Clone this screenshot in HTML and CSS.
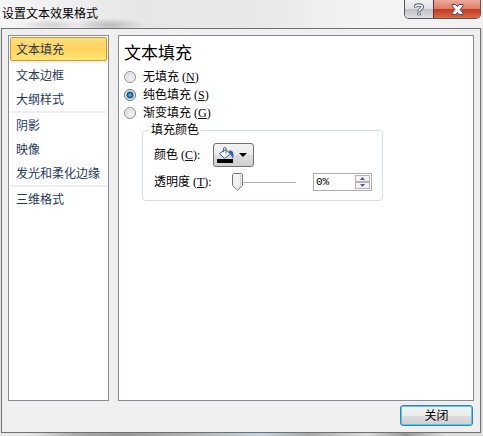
FILE: index.html
```html
<!DOCTYPE html>
<html lang="zh-CN">
<head>
    <meta charset="UTF-8">
    <meta name="viewport" content="width=device-width, initial-scale=1.0">
    <title>设置文本效果格式</title>
    <link rel="stylesheet" href="styles.css">
</head>
<body>

    <!-- Title Bar -->
    <header class="titlebar">
        <h1>设置文本效果格式</h1>
        <div class="window-buttons">
            <button type="button" class="help" aria-label="帮助">
                <svg width="10" height="13" viewBox="0 0 10 13" fill="none">
                    <path d="M1.5 4.5V3.8C1.5 1.2 8.3 1.2 8.3 4C8.3 6 5 6 5 8.6M5 9.8V12.2" stroke="#4c5064" stroke-width="3.4"/>
                    <path d="M1.5 4V3.8C1.8 1.4 8.2 1.4 8.2 4C8.2 6 5 6 5 8M5 10.2V11.8" stroke="#fff" stroke-width="1.6"/>
                </svg>
            </button>
            <button type="button" class="close" aria-label="关闭窗口">
                <svg width="13" height="11" viewBox="0 0 13 11">
                    <path d="M1 .5H4.9L6.5 2.6L8.1 .5H12V2L9.1 5.5L12 9V10.5H8.1L6.5 8.4L4.9 10.5H1V9L3.9 5.5L1 2Z" fill="#fff" stroke="#504c60"/>
                </svg>
            </button>
        </div>
    </header>

    <div class="dialog">
        <div class="panels">

            <!-- Category List -->
            <nav class="sidebar">
                <ul>
                    <li><a href="#fill" class="active">文本填充</a></li>
                </ul>
                <ul>
                    <li><a href="#border">文本边框</a></li>
                    <li><a href="#outline">大纲样式</a></li>
                </ul>
                <ul>
                    <li><a href="#shadow">阴影</a></li>
                    <li><a href="#reflection">映像</a></li>
                    <li><a href="#glow">发光和柔化边缘</a></li>
                </ul>
                <ul>
                    <li><a href="#format3d">三维格式</a></li>
                </ul>
            </nav>

            <!-- Fill Options -->
            <main class="content" id="fill">
                <h2>文本填充</h2>
                <label class="option"><input type="radio" name="fill">无填充<span class="key">(<u>N</u>)</span></label>
                <label class="option"><input type="radio" name="fill" checked>纯色填充<span class="key">(<u>S</u>)</span></label>
                <label class="option"><input type="radio" name="fill">渐变填充<span class="key">(<u>G</u>)</span></label>

                <fieldset>
                    <legend>填充颜色</legend>
                    <div class="row">
                        <label for="color">颜色<span class="key">(<u>C</u>):</span></label>
                        <button type="button" id="color" class="color-button">
                            <svg width="18" height="16" viewBox="0 0 18 16">
                                <path d="M12 3.5C15.5 3 17.5 5.5 16 11.5C14.5 10.5 14.5 7 11.5 5.5Z" fill="#2f62b5"/>
                                <path d="M2.5 6.5L8.5 2.5L13.5 7L7.5 11.5Z" fill="#e4effb" stroke="#42618f"/>
                                <path d="M4.5 7.5L8.5 4.5L10.5 6L6 9Z" fill="#fff"/>
                                <path d="M6.5 5V1.5C6.5 0 9 0 9 1.5V6.5" fill="none" stroke="#56647c"/>
                                <rect x="0" y="12" width="16" height="4" fill="#000"/>
                            </svg>
                            <svg width="8" height="4" viewBox="0 0 8 4">
                                <path d="M0 0H8L4 4Z" fill="#000"/>
                            </svg>
                        </button>
                    </div>
                    <div class="row">
                        <label for="opacity">透明度<span class="key">(<u>T</u>):</span></label>
                        <input type="range" id="opacity" min="0" max="100" value="0">
                        <div class="spinner">
                            <input type="text" value="0%" aria-label="透明度">
                            <div class="steps">
                                <button type="button" aria-label="增加"><svg width="5" height="3" viewBox="0 0 5 3"><path d="M0 3L2.5 0L5 3Z" fill="#3f5cb0"/></svg></button>
                                <button type="button" aria-label="减少"><svg width="5" height="3" viewBox="0 0 5 3"><path d="M0 0L2.5 3L5 0Z" fill="#3f5cb0"/></svg></button>
                            </div>
                        </div>
                    </div>
                </fieldset>
            </main>
        </div>

        <footer>
            <button type="button" class="default-button">关闭</button>
        </footer>
    </div>

</body>
</html>
```
FILE: styles.css
```css
/* Base Styling */
* {
    box-sizing: border-box;
}

body {
    display: flex;
    flex-direction: column;
    min-height: 100vh;
    margin: 0;
    padding: 0 2px 3px 1px;
    font-family: "Liberation Sans", "Noto Sans CJK SC", sans-serif;
    font-size: 12px;
    line-height: 16px;
    color: #000;
    background: linear-gradient(90deg, #e8e8e8 6%, #aaa 16%, #999 26%, #b4b4b4 40%, #c6d4dc 54%, #a8a8a8 64%, #ddd 76%, #999 84%, #ddd 92%);
}

button,
input {
    margin: 0;
    padding: 0;
    font: inherit;
    color: inherit;
}

/* Title Bar */
.titlebar {
    display: flex;
    justify-content: space-between;
    align-items: flex-start;
    height: 28px;
    margin: 0 -2px 0 -1px;
    padding: 0 2px;
    background:
        radial-gradient(ellipse 36px 7px at 110px 25px, #bbb, transparent),
        radial-gradient(ellipse 30px 6px at 50px 25px, #d2d2d2, transparent),
        linear-gradient(90deg, #f6f6f6, #e6e6e6 30%, #e9e9e9 55%, #f4f4f4 75%, #f2f2f2);
}

.titlebar h1 {
    margin: 0;
    padding-top: 6px;
    font-size: 12px;
    font-weight: 400;
}

.window-buttons {
    display: flex;
    height: 19px;
    border: 1px solid #55585f;
    border-top: 0;
    border-radius: 0 0 5px 5px;
    overflow: hidden;
}

.window-buttons button {
    display: flex;
    justify-content: center;
    align-items: center;
    border: 0;
}

.help {
    width: 28px;
    background: linear-gradient(#f2f2f2, #dedfe2 50%, #bfc1c6 50%, #dcdee2);
}

.window-buttons .close {
    width: 47px;
    border-left: 1px solid #6b2a22;
    background: linear-gradient(#eda998, #dd7b66 50%, #c23a20 50%, #d9694a);
}

/* Dialog Layout */
.dialog {
    display: flex;
    flex: 1;
    flex-direction: column;
    padding: 6px;
    border: 1px solid #6f7073;
    background-color: #efefef;
}

.panels {
    display: flex;
    flex: 1;
    gap: 9px;
}

.sidebar,
.content {
    border: 1px solid #868b95;
    background-color: #fff;
}

/* Category List */
.sidebar {
    width: 101px;
    padding: 1px;
}

.sidebar ul {
    margin: 0;
    padding: 0;
    list-style: none;
}

.sidebar ul + ul {
    border-top: 2px solid #eeeff6;
}

.sidebar a {
    display: block;
    height: 24px;
    padding-left: 5px;
    border: 1px solid transparent;
    line-height: 24px;
    white-space: nowrap;
    color: #1e395b;
    text-decoration: none;
}

.sidebar .active {
    border-color: #c29b29;
    border-radius: 2px;
    background: linear-gradient(#fcdf83, #ffd25d 50%, #ffe673);
}

/* Fill Options */
.content {
    flex: 1;
    padding: 6px 5px;
}

.content h2 {
    margin: 0 0 2px;
    font-size: 17px;
    font-weight: 400;
    line-height: 24px;
}

.option {
    display: flex;
    align-items: center;
    height: 18px;
}

.option input {
    appearance: none;
    width: 12px;
    height: 12px;
    margin-right: 7px;
    border: 1px solid #8e8f8f;
    border-radius: 50%;
    background: radial-gradient(circle at 60% 60%, #f4f4f4, #c9ced3);
    box-shadow: inset 0 0 0 1px #f4f4f4;
}

.option input:checked {
    border-color: #5b6d80;
    background: radial-gradient(circle, #5cc6ee, #12507c 3px, #d5e0e8 4px);
}

.key {
    margin-left: 3px;
    font-family: "Liberation Serif", serif;
}

fieldset {
    display: flex;
    flex-direction: column;
    gap: 6px;
    width: 241px;
    margin: 0 0 0 18px;
    padding: 5px 10px 9px 11px;
    border: 1px solid #d5dfe8;
    border-radius: 4px;
}

legend {
    margin-left: -5px;
    padding: 0 2px;
}

.row {
    display: flex;
    align-items: center;
}

.row label {
    width: 59px;
    white-space: nowrap;
}

.color-button {
    display: flex;
    justify-content: space-between;
    align-items: center;
    width: 41px;
    height: 24px;
    padding: 0 6px 0 3px;
    border: 1px solid #707070;
    border-radius: 3px;
    background: linear-gradient(#f2f2f2, #ebebeb 50%, #ddd 50%, #cfcfcf);
}

/* Transparency Slider */
input[type="range"] {
    appearance: none;
    width: 64px;
    height: 18px;
    margin: 0 17px 0 19px;
    background: linear-gradient(#aeaeae, #aeaeae) center / 100% 1px no-repeat;
}

input[type="range"]::-webkit-slider-thumb {
    appearance: none;
    width: 11px;
    height: 18px;
    background: url("data:image/svg+xml,%3Csvg xmlns='http://www.w3.org/2000/svg' width='11' height='18'%3E%3Cpath d='M.5 1.5L1.5 .5H9.5L10.5 1.5V12.5L5.5 17.3L.5 12.5Z' fill='%23f2f2f2' stroke='%23777'/%3E%3Cpath d='M8.5 2V12L5.5 15' fill='none' stroke='%23d0d0d0'/%3E%3C/svg%3E") no-repeat;
    border: 0;
}

.spinner {
    display: flex;
    width: 59px;
    height: 18px;
    padding: 1px;
    border: 1px solid #abadb3;
}

.spinner input {
    flex: 1;
    min-width: 0;
    padding-left: 1px;
    border: 0;
    font-family: "Liberation Mono", monospace;
    font-size: 11px;
}

.steps {
    display: flex;
    flex-direction: column;
    width: 15px;
}

.steps button {
    display: flex;
    flex: 1;
    justify-content: center;
    align-items: center;
    border: 1px solid #b4b4b4;
    background-color: #f2f2f2;
}

/* Dialog Buttons */
footer {
    display: flex;
    justify-content: flex-end;
    padding: 4px 1px 0 0;
}

.default-button {
    width: 73px;
    height: 21px;
    border: 1px solid #3c7fb1;
    border-radius: 3px;
    background: linear-gradient(#f2f2f2, #ebebeb 50%, #ddd 50%, #cfcfcf);
    box-shadow: inset 0 0 0 1px #48d0f4;
}
```
